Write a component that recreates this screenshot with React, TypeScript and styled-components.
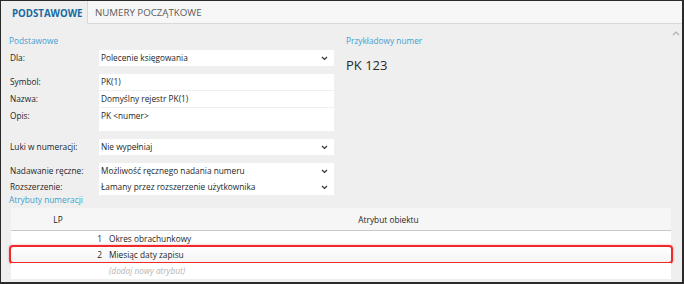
import styled, { createGlobalStyle } from 'styled-components';

const GlobalStyle = createGlobalStyle`
  html, body {
    margin: 0;
    padding: 0;
    background: #ffffff;
  }
  body {
    font-family: 'Open Sans', 'Noto Sans', sans-serif;
    font-size: 8.3px;
    color: #1e1e1e;
  }
`;

const Chevron = () => (
  <svg width="7" height="5" viewBox="0 0 7 5">
    <path d="M1 1 L3.5 3.5 L6 1" fill="none" stroke="#333" strokeWidth="1.2" />
  </svg>
);

type FieldProps = { label: string; value: string; select?: boolean; tall?: boolean };

const Field = ({ label, value, select, tall }: FieldProps) => (
  <FieldRow>
    <FieldLabel>{label}</FieldLabel>
    <FieldBox $tall={tall}>
      <span>{value}</span>
      {select && <Chevron />}
    </FieldBox>
  </FieldRow>
);

const rows = [
  { lp: 1, name: 'Okres obrachunkowy' },
  { lp: 2, name: 'Miesiąc daty zapisu', selected: true },
];

const App = () => {
  return (
    <>
      <GlobalStyle />
      <Frame>
        <TabBar>
          <Tab $active>PODSTAWOWE</Tab>
          <Tab>NUMERY POCZĄTKOWE</Tab>
        </TabBar>
        <ScrollMark>
          <svg width="8" height="5" viewBox="0 0 8 5">
            <path d="M1 4 L4 1 L7 4" fill="none" stroke="#b0b0b0" strokeWidth="1.2" />
          </svg>
        </ScrollMark>
        <Content>
          <TopGrid>
            <Column>
              <SectionTitle>Podstawowe</SectionTitle>
              <FieldGroup>
                <Field label="Dla:" value="Polecenie księgowania" select />
              </FieldGroup>
              <FieldGroup>
                <Field label="Symbol:" value="PK(1)" />
                <Field label="Nazwa:" value="Domyślny rejestr PK(1)" />
                <Field label="Opis:" value="PK <numer>" tall />
              </FieldGroup>
              <FieldGroup $space={8}>
                <Field label="Luki w numeracji:" value="Nie wypełniaj" select />
              </FieldGroup>
              <FieldGroup $space={0} $tight>
                <Field label="Nadawanie ręczne:" value="Możliwość ręcznego nadania numeru" select />
                <Field label="Rozszerzenie:" value="Łamany przez rozszerzenie użytkownika" select />
              </FieldGroup>
            </Column>
            <Column>
              <SectionTitle>Przykładowy numer</SectionTitle>
              <Sample>PK 123</Sample>
            </Column>
          </TopGrid>
          <SectionTitle $lift>Atrybuty numeracji</SectionTitle>
          <Table>
            <HeaderRow>
              <HeaderCell>LP</HeaderCell>
              <HeaderCell>Atrybut obiektu</HeaderCell>
            </HeaderRow>
            {rows.map((r) => (
              <Row key={r.lp} $selected={r.selected}>
                <LpCell>{r.lp}</LpCell>
                <NameCell>{r.name}</NameCell>
                {r.selected && <Highlight />}
              </Row>
            ))}
            <Row>
              <LpCell />
              <NameCell $placeholder>(dodaj nowy atrybut)</NameCell>
            </Row>
          </Table>
          <SectionTitle>Dodatkowe</SectionTitle>
        </Content>
      </Frame>
    </>
  );
};

const Frame = styled.div`
  position: relative;
  width: 684px;
  height: 284px;
  box-sizing: border-box;
  border-style: solid;
  border-color: #2a2a2a;
  border-width: 1px 2px 2px 1px;
  background: #efefef;
  overflow: hidden;
`;

const TabBar = styled.div`
  display: flex;
  height: 22px;
  background: #f7f7f7;
  border-bottom: 1px solid #d9d9d9;
`;

const Tab = styled.div<{ $active?: boolean }>`
  display: flex;
  align-items: center;
  box-sizing: border-box;
  padding: ${(p) => (p.$active ? '1px 0 0 11px' : '1px 0 0 7px')};
  width: ${(p) => (p.$active ? '87px' : 'auto')};
  font-size: 9.7px;
  font-weight: ${(p) => (p.$active ? 700 : 400)};
  color: ${(p) => (p.$active ? '#16699f' : '#5a5a5a')};
  background: ${(p) => (p.$active ? '#efefef' : 'transparent')};
  border-right: ${(p) => (p.$active ? '1px solid #d9d9d9' : 'none')};
  margin-bottom: ${(p) => (p.$active ? '-1px' : '0')};
`;

const ScrollMark = styled.div`
  position: absolute;
  right: 2px;
  top: 26px;
`;

const Content = styled.div`
  padding: 11px 0 0 8px;
`;

const TopGrid = styled.div`
  display: grid;
  grid-template-columns: 325px 1fr;
  column-gap: 12px;
`;

const Column = styled.div`
  display: flex;
  flex-direction: column;
`;

const SectionTitle = styled.div<{ $lift?: boolean }>`
  color: #3b9fcf;
  font-size: 8.3px;
  line-height: 12px;
  margin-top: ${(p) => (p.$lift ? '-1px' : '0')};
  margin-bottom: ${(p) => (p.$lift ? '2px' : '3px')};
`;

const FieldGroup = styled.div<{ $space?: number; $tight?: boolean }>`
  display: flex;
  flex-direction: column;
  gap: ${(p) => (p.$tight ? '0' : '1px')};
  margin-bottom: ${(p) => (p.$space ?? 8)}px;
`;

const FieldRow = styled.div`
  display: grid;
  grid-template-columns: 90px 235px;
  align-items: start;
`;

const FieldLabel = styled.div`
  line-height: 16px;
  padding-left: 1px;
  white-space: nowrap;
`;

const FieldBox = styled.div<{ $tall?: boolean }>`
  display: flex;
  align-items: ${(p) => (p.$tall ? 'flex-start' : 'center')};
  justify-content: space-between;
  height: ${(p) => (p.$tall ? '23px' : '16px')};
  padding: 0 6px 0 2px;
  background: #ffffff;
  line-height: 16px;
  box-sizing: border-box;
  white-space: nowrap;
`;

const Sample = styled.div`
  margin-top: 6px;
  font-size: 13px;
  color: #2a2a2a;
`;

const Table = styled.div`
  display: flex;
  flex-direction: column;
  width: 660px;
  margin: 0 0 2px 2px;
`;

const HeaderRow = styled.div`
  display: grid;
  grid-template-columns: 94px 1fr;
  column-gap: 1px;
  height: 22px;
  background: #f6f6f6;
  border-bottom: 1px solid #c9c9c9;
`;

const HeaderCell = styled.div`
  display: flex;
  align-items: center;
  justify-content: center;
  background: #f6f6f6;
`;

const Row = styled.div<{ $selected?: boolean }>`
  position: relative;
  display: grid;
  grid-template-columns: 94px 1fr;
  column-gap: 1px;
  height: 16px;
  background: ${(p) => (p.$selected ? 'linear-gradient(#ffffff, #f3f3f3)' : '#ffffff')};
`;

const LpCell = styled.div`
  text-align: right;
  padding-right: 3px;
  line-height: 16px;
`;

const NameCell = styled.div<{ $placeholder?: boolean }>`
  line-height: 16px;
  padding-left: 3px;
  font-style: ${(p) => (p.$placeholder ? 'italic' : 'normal')};
  color: ${(p) => (p.$placeholder ? '#b5b5b5' : 'inherit')};
`;

const Highlight = styled.div`
  position: absolute;
  left: -2px;
  right: -2px;
  top: -2px;
  bottom: -1px;
  border: 2px solid #ee2a2a;
  border-radius: 4px;
  box-shadow: 0 0 2px rgba(238, 42, 42, 0.5);
  pointer-events: none;
`;

export default App;
